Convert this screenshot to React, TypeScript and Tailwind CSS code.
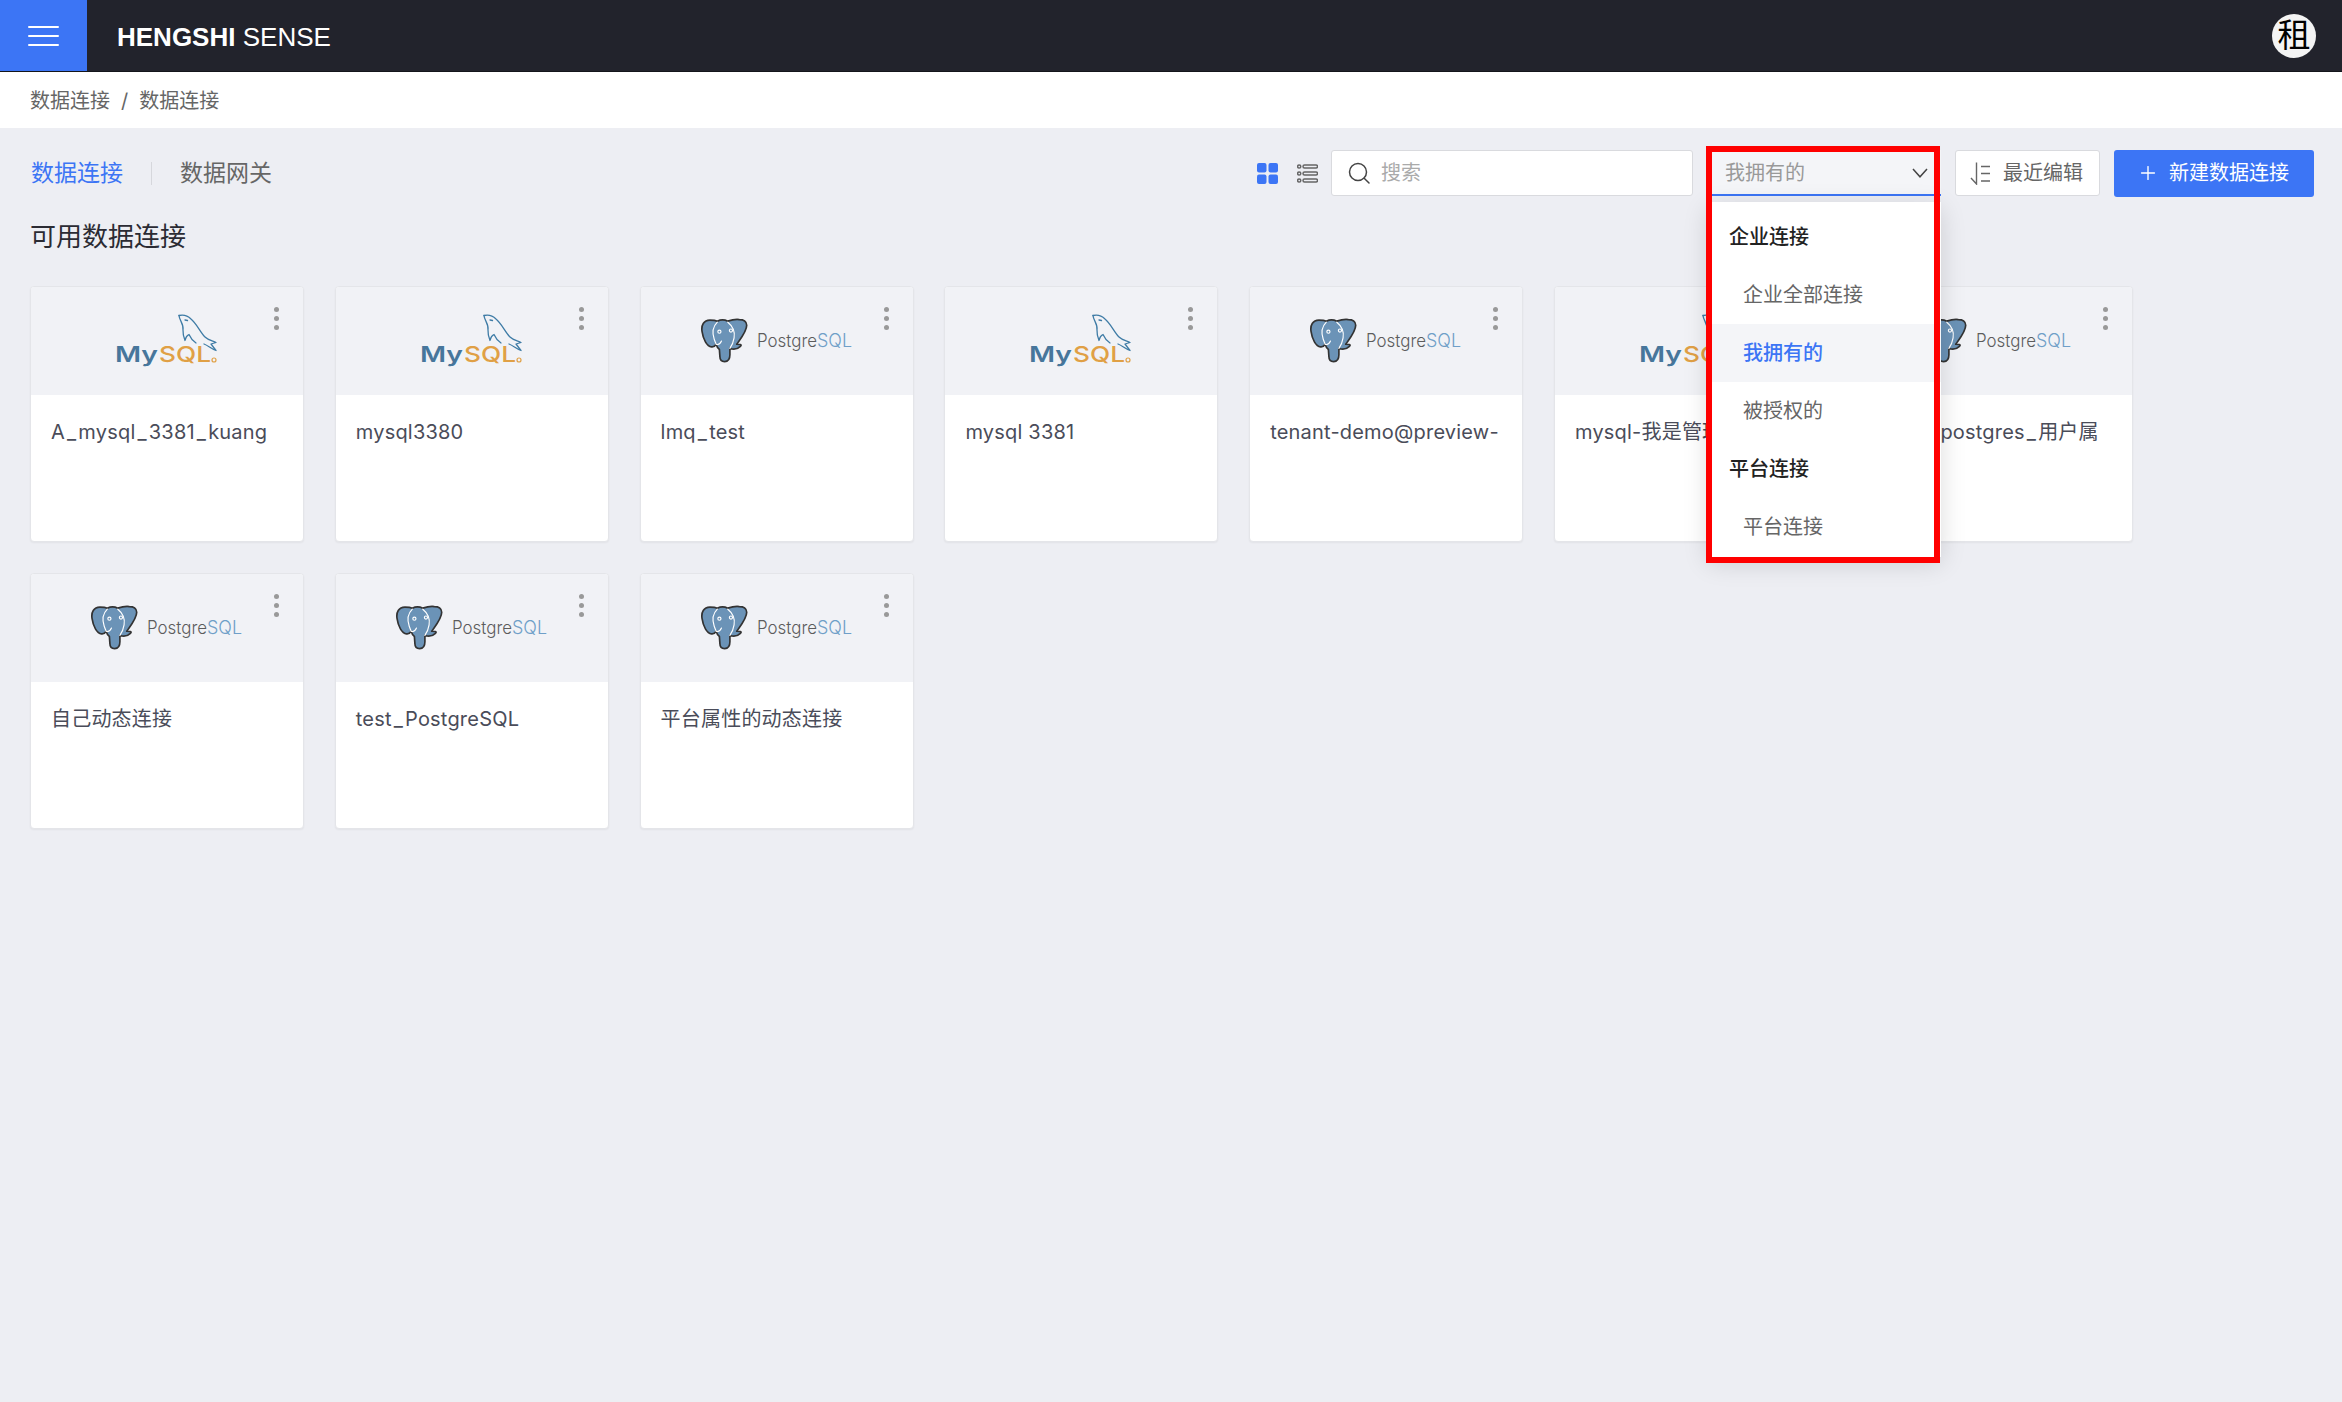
import { Plus } from 'lucide-react'

type Kind = 'mysql' | 'pg'

const rows: { name: string; kind: Kind }[] = [
  { name: 'A_mysql_3381_kuang', kind: 'mysql' },
  { name: 'mysql3380', kind: 'mysql' },
  { name: 'lmq_test', kind: 'pg' },
  { name: 'mysql 3381', kind: 'mysql' },
  { name: 'tenant-demo@preview-', kind: 'pg' },
  { name: 'mysql-我是管理员的', kind: 'mysql' },
  { name: '租户的postgres_用户属', kind: 'pg' },
  { name: '自己动态连接', kind: 'pg' },
  { name: 'test_PostgreSQL', kind: 'pg' },
  { name: '平台属性的动态连接', kind: 'pg' },
]

function MysqlLogo() {
  return (
    <svg width="104" height="54" viewBox="0 0 104 54">
      <text x="0" y="48" fontFamily="Inter" fontSize="21" fontWeight="600" fill="#47769b" textLength="43" lengthAdjust="spacingAndGlyphs">
        My
      </text>
      <text x="44" y="48" fontFamily="Inter" fontSize="22" fontWeight="500" fill="#e0a045" textLength="52" lengthAdjust="spacingAndGlyphs">
        SQL
      </text>
      <circle cx="99" cy="46" r="2" fill="none" stroke="#e0a045" strokeWidth="1.2" />
      <g fill="none" stroke="#3f7ca6" strokeWidth="1.3" strokeLinejoin="round" strokeLinecap="round">
        <path d="M64 1.5C68 0.5 73 2 76 5C82 10 85 18 90 23C93 26 98 27 101 28.5L96 30L101 36.5C96 34.5 93 31.5 89 30" />
        <path d="M64 1.5C64.5 7 69 10 68 16C67.8 20 69 24 70 26.5C70.5 23.5 72 21.5 74 20.5C75.5 24 78 27 81 29" />
        <path d="M70 6L72.5 6.5" />
      </g>
    </svg>
  )
}

function PostgresLogo() {
  return (
    <svg width="152" height="46" viewBox="0 0 152 46">
      <g transform="translate(-0.5 0) scale(1.05)">
        <path
          d="M9 2C3 2 .5 7 1.5 13C2.5 20 6 27 10.5 27.5C12.5 27.8 14 26.5 15 25C15.5 27 16.5 29 18 30L18.5 37C18.5 40 20 41.5 23 41.5C26.5 41.5 28 39 28 35L28 29C31 30 35 30 38 27C40 25 37 25 34.5 25C38 20 44 13 44 7C44 3 41 1.5 37 1.5C33 1 29 2 26 3C23 1.5 19 1.5 16 3C14 2 11 2 9 2Z"
          fill="#6b93b7"
          stroke="#333"
          strokeWidth="1.6"
          strokeLinejoin="round"
        />
        <g fill="none" stroke="#fff" strokeWidth="1.1" strokeLinecap="round">
          <path d="M16 4C12 8 11 14 13 20C14 23 15 25 15 25" />
          <path d="M26 4C31 8 33 13 32 19C31.5 22 31 25 28 29" />
          <path d="M15 25C17 26 19 24 20 22" />
          <circle cx="18" cy="13" r="1.5" />
          <circle cx="29" cy="12" r="1.5" />
        </g>
      </g>
      <text x="56" y="28.5" fontFamily="Inter" fontSize="18" fontWeight="300" fill="#5c5c5c" textLength="60" lengthAdjust="spacingAndGlyphs">
        Postgre
      </text>
      <text x="116" y="28.5" fontFamily="Inter" fontSize="18" fontWeight="300" fill="#6f9fc8" textLength="35" lengthAdjust="spacingAndGlyphs">
        SQL
      </text>
    </svg>
  )
}

// the product font draws a longer underscore than Inter does
function Name({ text }: { text: string }) {
  const parts = text.split('_')
  return (
    <>
      {parts.map((p, i) => (
        <span key={i}>
          {i > 0 && <span className="px-[2px]">_</span>}
          {p}
        </span>
      ))}
    </>
  )
}

function Card({ name, kind }: { name: string; kind: Kind }) {
  return (
    <div className="relative h-[256px] overflow-hidden rounded-[4px] border border-[#e4e5e9] bg-white shadow-[0_1px_2px_rgba(0,0,0,0.05)]">
      <div className="flex h-[108px] items-center justify-center bg-[#f1f2f6]">
        {kind === 'mysql' ? <MysqlLogo /> : <PostgresLogo />}
      </div>
      <div className="absolute top-[20px] right-[24px] flex flex-col gap-[4px]">
        <span className="h-[5px] w-[5px] rounded-full bg-[#999]" />
        <span className="h-[5px] w-[5px] rounded-full bg-[#999]" />
        <span className="h-[5px] w-[5px] rounded-full bg-[#999]" />
      </div>
      <p className="truncate px-[20px] pt-[23px] text-[20px] leading-[28px] tracking-[0.2px] text-[#4a4c59]">
        <Name text={name} />
      </p>
    </div>
  )
}

function OwnerSelect() {
  return (
    <div className="relative h-[46px] w-[233px]">
      <div className="flex h-full items-center justify-between border-b-2 border-[#3c75f5] bg-[#f4f5f8] pt-[2px] pr-[13px] pl-[17px] text-[20px] text-[#999]">
        <span>我拥有的</span>
        <svg width="16" height="10" viewBox="0 0 16 10" fill="none" stroke="#444" strokeWidth="1.5">
          <path d="M1 1L8 8.8L15 1" />
        </svg>
      </div>
      <div className="absolute top-[52px] left-0 z-10 w-full bg-white pt-[6px] pb-[1px] text-[20px] shadow-[0_6px_24px_rgba(0,0,0,0.14)]">
        <div className="flex h-[58px] items-center pl-[21px] font-medium text-[#222]">企业连接</div>
        <div className="flex h-[58px] items-center pl-[35px] text-[#666]">企业全部连接</div>
        <div className="flex h-[58px] items-center bg-[#f4f5f8] pl-[35px] font-medium text-[#3c75f5]">我拥有的</div>
        <div className="flex h-[58px] items-center pl-[35px] text-[#666]">被授权的</div>
        <div className="flex h-[58px] items-center pl-[21px] font-medium text-[#222]">平台连接</div>
        <div className="flex h-[58px] items-center pl-[35px] text-[#666]">平台连接</div>
      </div>
      <div className="pointer-events-none absolute top-[-4px] left-[-2px] z-20 h-[417px] w-[234px] border-[6px] border-[#ff0000]" />
    </div>
  )
}

export default function App() {
  return (
    <div className="min-h-[1402px] bg-[#edeef3] font-['Inter','Noto_Sans_CJK_SC',sans-serif]">
      <header className="flex h-[72px] items-center justify-between border-b border-[#14151b] bg-[#22232c] pr-[26px]">
        <div className="flex items-center">
          <div className="flex h-[71px] w-[87px] items-center justify-center bg-[#3c75f5]">
            <svg width="31" height="20" viewBox="0 0 31 20" stroke="#fff" strokeWidth="2" strokeLinecap="round">
              <path d="M1 1H30M1 10H30M1 19H30" />
            </svg>
          </div>
          <div className="ml-[30px] pt-[3px] font-['Liberation_Sans',sans-serif] text-[26px] text-white">
            <span className="font-bold">HENGSHI</span> SENSE
          </div>
        </div>
        <div className="flex h-[44px] w-[44px] items-center justify-center rounded-full bg-[#f4f4f4] text-[33px] leading-none text-black">
          租
        </div>
      </header>

      <div className="flex h-[56px] items-center gap-[11px] bg-white pt-[2px] pl-[30px] text-[20px] text-[#666]">
        <span>数据连接</span>
        <span>/</span>
        <span>数据连接</span>
      </div>

      <main className="pt-[22px] pr-[28px] pl-[30px]">
        <div className="flex h-[46px] items-center">
          <div className="ml-[1px] flex items-center text-[23px]">
            <span className="text-[#3c75f5]">数据连接</span>
            <span className="mx-[28px] h-[23px] w-px bg-[#d6d7dc]" />
            <span className="text-[#666]">数据网关</span>
          </div>
          <div className="ml-auto flex items-center">
            <svg width="21" height="21" viewBox="0 0 21 21" className="mr-[19px]">
              <rect x="0" y="0" width="9.5" height="9.5" rx="2" fill="#3c75f5" />
              <rect x="11.5" y="0" width="9.5" height="9.5" rx="2" fill="#3c75f5" />
              <rect x="0" y="11.5" width="9.5" height="9.5" rx="2" fill="#3c75f5" />
              <rect x="11.5" y="11.5" width="9.5" height="9.5" rx="2" fill="#3c75f5" />
            </svg>
            <svg width="21" height="21" viewBox="0 0 21 21" fill="none" stroke="#666" strokeWidth="1.5" className="mr-[13px]">
              <circle cx="2.2" cy="3.5" r="1.6" />
              <circle cx="2.2" cy="10.5" r="1.6" />
              <circle cx="2.2" cy="17.5" r="1.6" />
              <rect x="6" y="2" width="14.5" height="3" rx="1.5" />
              <rect x="6" y="9" width="14.5" height="3" rx="1.5" />
              <rect x="6" y="16" width="14.5" height="3" rx="1.5" />
            </svg>
            <div className="mr-[15px] flex h-[46px] w-[362px] items-center rounded-[3px] border border-[#d9dade] bg-white pl-[16px]">
              <svg width="22" height="22" viewBox="0 0 22 22" fill="none" stroke="#444" strokeWidth="1.5" strokeLinecap="round">
                <circle cx="10" cy="10" r="8.5" />
                <path d="M16.2 16.2L21 21" />
              </svg>
              <span className="ml-[11px] text-[20px] text-[#aaa]">搜索</span>
            </div>
            <OwnerSelect />
            <div className="mr-[14px] ml-[14px] flex h-[46px] w-[145px] items-center rounded-[3px] border border-[#d9dade] bg-white pl-[14px] text-[20px] text-[#666]">
              <svg width="21" height="23" viewBox="0 0 21 23" fill="none" stroke="#666" strokeWidth="1.4">
                <path d="M6.5 0.5V22L1 16" />
                <path d="M11 4.5H20M11 11.5H20M11 19H20" />
              </svg>
              <span className="ml-[12px]">最近编辑</span>
            </div>
            <div className="flex h-[47px] w-[200px] items-center rounded-[3px] bg-[#3c75f5] pl-[23px] text-[20px] text-white">
              <Plus size={22} strokeWidth={1.5} />
              <span className="ml-[10px]">新建数据连接</span>
            </div>
          </div>
        </div>

        <h2 className="mt-[23px] text-[26px] leading-[36px] font-normal text-[#2b2b33]">可用数据连接</h2>

        <div className="mt-[31px] grid grid-cols-[repeat(7,274px)] gap-x-[30.8px] gap-y-[31px]">
          {rows.map((r) => (
            <Card key={r.name} name={r.name} kind={r.kind} />
          ))}
        </div>
      </main>
    </div>
  )
}
